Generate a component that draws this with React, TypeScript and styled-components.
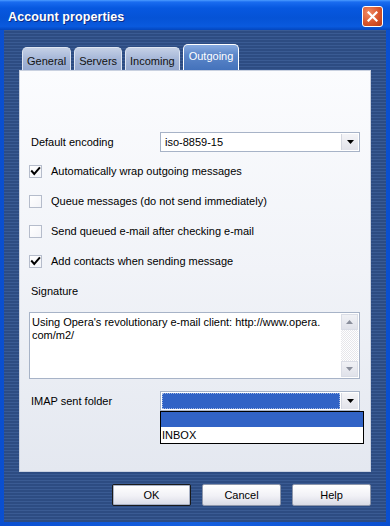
import React from "react";
import styled, { createGlobalStyle } from "styled-components";

const GlobalStyle = createGlobalStyle`
  html, body {
    margin: 0;
    padding: 0;
  }
  body {
    width: 390px;
    height: 526px;
    overflow: hidden;
    font-family: "Liberation Sans", Arial, sans-serif;
    font-size: 11px;
    color: #000;
  }
`;

const Window = styled.div`
  width: 390px;
  height: 526px;
  display: flex;
  flex-direction: column;
  background: linear-gradient(90deg, #0a4fd0, #1560e0 50%, #0a4fd0);
`;

const TitleBar = styled.div`
  height: 30px;
  flex: none;
  display: flex;
  align-items: center;
  justify-content: space-between;
  padding: 0 7px 0 8px;
  background: linear-gradient(
    180deg,
    #4c9cff 0,
    #1a6cf0 2px,
    #0758e0 8px,
    #0553d6 60%,
    #0a5ade 88%,
    #0346be 100%
  );
`;

const Title = styled.span`
  color: #fff;
  font-weight: bold;
  font-size: 12.5px;
  letter-spacing: 0.1px;
  margin-top: 3px;
  text-shadow: 1px 1px 0 #0b2c86;
`;

const CloseButton = styled.div`
  width: 19px;
  height: 19px;
  border: 1px solid #fff;
  border-radius: 3px;
  display: flex;
  align-items: center;
  justify-content: center;
  background: radial-gradient(circle at 30% 30%, #f08a64, #d9552c 55%, #b83a15);
  margin-top: 3px;
`;

const Body = styled.div`
  flex: 1;
  margin: 0 4px 4px;
  padding: 14px 15px 0;
  display: flex;
  flex-direction: column;
  background: repeating-linear-gradient(
    180deg,
    #3a5b93 0,
    #3a5b93 1px,
    #2d4c82 1px,
    #2d4c82 3px
  );
`;

const TabRow = styled.div`
  display: flex;
  align-items: flex-end;
  gap: 3px;
  height: 26px;
  padding-left: 3px;
`;

const Tab = styled.div<{ $active?: boolean }>`
  box-sizing: border-box;
  height: ${(p) => (p.$active ? 26 : 23)}px;
  padding: ${(p) => (p.$active ? "5px 5px 0" : "7px 4px 0")};
  border: 1px solid ${(p) => (p.$active ? "#ffffff" : "#dfe6f2")};
  border-bottom: none;
  border-radius: 5px 5px 0 0;
  color: ${(p) => (p.$active ? "#ffffff" : "#111")};
  background: ${(p) =>
    p.$active
      ? "linear-gradient(180deg, #86aae0, #5b86c9 40%, #4472bb)"
      : "linear-gradient(180deg, #c4d0e6, #a6b7d8 50%, #94a8cf)"};
  font-size: 11px;
`;

const Panel = styled.div`
  height: 402px;
  box-sizing: border-box;
  border: 1px solid #c9d1e0;
  padding: 61px 10px 0 9px;
  display: flex;
  flex-direction: column;
  background: linear-gradient(180deg, #fbfcfe, #f1f3f8 50%, #e4e8f0);
`;

const FieldRow = styled.div<{ $gap?: number }>`
  display: grid;
  grid-template-columns: 131px 1fr;
  align-items: center;
  height: 20px;
  margin-top: ${(p) => p.$gap ?? 0}px;
`;

const Label = styled.span`
  padding-left: 2px;
`;

const Select = styled.div`
  position: relative;
  box-sizing: border-box;
  height: 20px;
  border: 1px solid #a7b3c7;
  background: #fff;
  display: flex;
  align-items: stretch;
`;

const SelectValue = styled.div<{ $focused?: boolean }>`
  flex: 1;
  display: flex;
  align-items: center;
  padding-left: 4px;
  ${(p) =>
    p.$focused
      ? `
    margin: 1px 0 1px 1px;
    background: #3163c6;
    outline: 1px dotted #9fb6e3;
    outline-offset: -1px;
  `
      : ""}
`;

const DropButton = styled.div`
  width: 16px;
  margin: 1px;
  display: flex;
  align-items: center;
  justify-content: center;
  background: linear-gradient(180deg, #f4f4f7, #e2e3ea);
  border-left: 1px solid #d3d6df;
`;

const DropList = styled.div`
  position: absolute;
  top: 100%;
  left: -1px;
  width: 204px;
  margin-top: 1px;
  box-sizing: border-box;
  border: 1px solid #000;
  background: #fff;
  z-index: 2;
`;

const DropItem = styled.div<{ $selected?: boolean }>`
  height: ${(p) => (p.$selected ? 15 : 16)}px;
  padding-left: 1px;
  display: flex;
  align-items: center;
  background: ${(p) => (p.$selected ? "#3163c6" : "#fff")};
  color: ${(p) => (p.$selected ? "#fff" : "#000")};
`;

const CheckRow = styled.div`
  height: 30px;
  display: flex;
  align-items: center;
  gap: 9px;
`;

const Box = styled.div`
  width: 13px;
  height: 13px;
  box-sizing: border-box;
  border: 1px solid #b5bccb;
  background: linear-gradient(135deg, #ffffff, #f3f4f8);
  display: flex;
  align-items: center;
  justify-content: center;
`;

const SectionLabel = styled.div`
  height: 30px;
  display: flex;
  align-items: center;
  padding-left: 2px;
`;

const TextArea = styled.div`
  margin-top: 6px;
  height: 67px;
  box-sizing: border-box;
  border: 1px solid #a7b3c7;
  background: #fff;
  display: flex;
`;

const TextContent = styled.div`
  flex: 1;
  padding: 3px 2px;
  line-height: 13px;
`;

const ScrollBar = styled.div`
  width: 17px;
  margin: 1px;
  display: flex;
  flex-direction: column;
  background-color: #ffffff;
  background-image: repeating-conic-gradient(#e6e6ea 0 25%, #ffffff 0 50%);
  background-size: 2px 2px;
`;

const ScrollArrow = styled.div`
  height: 16px;
  display: flex;
  align-items: center;
  justify-content: center;
  background: linear-gradient(180deg, #f0f1f5, #e0e2ea);
  border: 1px solid #dadde6;
  box-sizing: border-box;
`;

const ScrollTrack = styled.div`
  flex: 1;
`;

const ButtonRow = styled.div`
  display: flex;
  justify-content: flex-end;
  gap: 11px;
  margin-top: 12px;
`;

const Button = styled.div<{ $default?: boolean }>`
  width: 79px;
  height: 22px;
  box-sizing: border-box;
  border: 1px solid ${(p) => (p.$default ? "#1a1a1a" : "#8d96aa")};
  border-radius: 2px;
  display: flex;
  align-items: center;
  justify-content: center;
  background: linear-gradient(180deg, #ffffff, #f1f1f6 55%, #d9dbe5);
  box-shadow: ${(p) => (p.$default ? "inset 0 0 0 1px #a9b2c6" : "none")};
`;

const Arrow = ({ up, color = "#000" }: { up?: boolean; color?: string }) => (
  <svg width="7" height="4" viewBox="0 0 7 4">
    <polygon points={up ? "0,4 7,4 3.5,0" : "0,0 7,0 3.5,4"} fill={color} />
  </svg>
);

const Check = () => (
  <svg width="13" height="13" viewBox="0 0 13 13">
    <polyline
      points="2.2,6.2 5,9.4 11,2.4"
      fill="none"
      stroke="#000"
      strokeWidth="2.3"
      strokeLinecap="square"
    />
  </svg>
);

const checks = [
  { label: "Automatically wrap outgoing messages", on: true },
  { label: "Queue messages (do not send immediately)", on: false },
  { label: "Send queued e-mail after checking e-mail", on: false },
  { label: "Add contacts when sending message", on: true },
];

export default function App() {
  return (
    <>
      <GlobalStyle />
      <Window>
        <TitleBar>
          <Title>Account properties</Title>
          <CloseButton>
            <svg width="11" height="11" viewBox="0 0 11 11">
              <path
                d="M1.5 1.5 L9.5 9.5 M9.5 1.5 L1.5 9.5"
                stroke="#fff"
                strokeWidth="2.2"
                strokeLinecap="square"
              />
            </svg>
          </CloseButton>
        </TitleBar>
        <Body>
          <TabRow>
            <Tab>General</Tab>
            <Tab>Servers</Tab>
            <Tab>Incoming</Tab>
            <Tab $active>Outgoing</Tab>
          </TabRow>
          <Panel>
            <FieldRow>
              <Label>Default encoding</Label>
              <Select>
                <SelectValue>iso-8859-15</SelectValue>
                <DropButton>
                  <Arrow />
                </DropButton>
              </Select>
            </FieldRow>
            <div style={{ height: 4 }} />
            {checks.map((c) => (
              <CheckRow key={c.label}>
                <Box>{c.on && <Check />}</Box>
                <span>{c.label}</span>
              </CheckRow>
            ))}
            <SectionLabel>Signature</SectionLabel>
            <TextArea>
              <TextContent>
                Using Opera's revolutionary e-mail client: http://www.opera.
                <br />
                com/m2/
              </TextContent>
              <ScrollBar>
                <ScrollArrow>
                  <Arrow up color="#8a8f9c" />
                </ScrollArrow>
                <ScrollTrack />
                <ScrollArrow>
                  <Arrow color="#8a8f9c" />
                </ScrollArrow>
              </ScrollBar>
            </TextArea>
            <FieldRow $gap={12}>
              <Label>IMAP sent folder</Label>
              <Select>
                <SelectValue $focused />
                <DropButton>
                  <Arrow />
                </DropButton>
                <DropList>
                  <DropItem $selected />
                  <DropItem>INBOX</DropItem>
                </DropList>
              </Select>
            </FieldRow>
          </Panel>
          <ButtonRow>
            <Button $default>OK</Button>
            <Button>Cancel</Button>
            <Button>Help</Button>
          </ButtonRow>
        </Body>
      </Window>
    </>
  );
}
